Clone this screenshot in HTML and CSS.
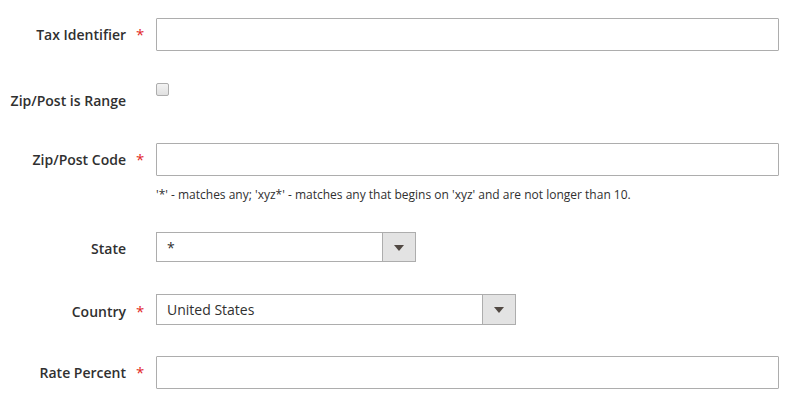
FILE: index.html
```html
<!DOCTYPE html>
<html lang="en">
<head>
<meta charset="utf-8">
<title>Tax Rate</title>
<link rel="stylesheet" href="styles.css">
</head>
<body>
<form class="form">
  <div class="field field-text">
    <div class="label"><span class="label-text">Tax Identifier</span><span class="req">*</span></div>
    <div class="control"><input class="input input-wide" type="text"></div>
  </div>

  <div class="field field-check">
    <div class="label"><span class="label-text">Zip/Post is Range</span><span class="req"></span></div>
    <div class="control"><span class="checkbox"></span></div>
  </div>

  <div class="field field-text field-noted">
    <div class="label"><span class="label-text">Zip/Post Code</span><span class="req">*</span></div>
    <div class="control">
      <input class="input input-wide" type="text">
      <div class="note">'*' - matches any; 'xyz*' - matches any that begins on 'xyz' and are not longer than 10.</div>
    </div>
  </div>

  <div class="field field-select">
    <div class="label"><span class="label-text">State</span><span class="req"></span></div>
    <div class="control">
      <div class="select select-state"><span class="select-value">*</span><span class="select-arrow"><span class="tri"></span></span></div>
    </div>
  </div>

  <div class="field field-select field-country">
    <div class="label"><span class="label-text">Country</span><span class="req">*</span></div>
    <div class="control">
      <div class="select select-country"><span class="select-value">United States</span><span class="select-arrow"><span class="tri"></span></span></div>
    </div>
  </div>

  <div class="field field-text">
    <div class="label"><span class="label-text">Rate Percent</span><span class="req">*</span></div>
    <div class="control"><input class="input input-wide" type="text"></div>
  </div>
</form>
</body>
</html>
```

FILE: styles.css
```css
* { box-sizing: border-box; }

html, body {
  margin: 0;
  padding: 0;
  background: #ffffff;
}

body {
  font-family: "Open Sans", "Liberation Sans", sans-serif;
  color: #303030;
  font-size: 14px;
}

.form {
  padding-top: 18px;
  display: flex;
  flex-direction: column;
}

.field {
  display: flex;
  align-items: flex-start;
}

.label {
  width: 156px;
  flex: none;
  display: flex;
  justify-content: flex-end;
  font-weight: 600;
  font-size: 14px;
  color: #303030;
}

.label-text {
  display: block;
}

.req {
  width: 30px;
  flex: none;
  color: #e22626;
  padding-left: 10px;
  font-weight: 400;
  font-size: 15px;
}

.control {
  flex: none;
}

.input {
  display: block;
  width: 623px;
  height: 33px;
  border: 1px solid #adadad;
  border-radius: 1px;
  background: #fff;
  margin: 0;
  padding: 0 10px;
  font: inherit;
  outline: none;
}

/* text rows */
.field-text .label { line-height: 33px; height: 33px; }
.field-text { margin-bottom: 32px; }

/* checkbox row */
.field-check { margin-bottom: 32px; }
.field-check .label { padding-top: 7px; line-height: 21px; height: 28px; }
.checkbox {
  display: block;
  width: 13px;
  height: 13px;
  border: 1px solid #adadad;
  border-radius: 2px;
  background: linear-gradient(#f3f3f3, #e0e0e0);
}

/* note */
.field-noted { margin-bottom: 28px; }
.note {
  margin-top: 10px;
  font-size: 12px;
  line-height: 18px;
  font-weight: 400;
  color: #303030;
}

/* selects */
.field-select { margin-bottom: 30px; }
.field-select .label { padding-top: 2px; line-height: 30px; height: 32px; }
.field-country { margin-bottom: 29px; }
.field-country .label { padding-top: 2px; line-height: 31px; height: 33px; }

.select {
  display: flex;
  height: 30px;
  border: 1px solid #adadad;
  background: #fff;
}
.select-country { height: 31px; width: 360px; }
.select-state { width: 260px; }

.select-value {
  flex: 1;
  padding-left: 10px;
  line-height: 29px;
  font-size: 14px;
  color: #303030;
}

.select-arrow {
  width: 33px;
  flex: none;
  background: #e3e3e3;
  border-left: 1px solid #adadad;
  display: flex;
  align-items: center;
  justify-content: center;
}

.tri {
  width: 0;
  height: 0;
  border-left: 5px solid transparent;
  border-right: 5px solid transparent;
  border-top: 6px solid #514943;
  margin-top: 1px;
}
```
